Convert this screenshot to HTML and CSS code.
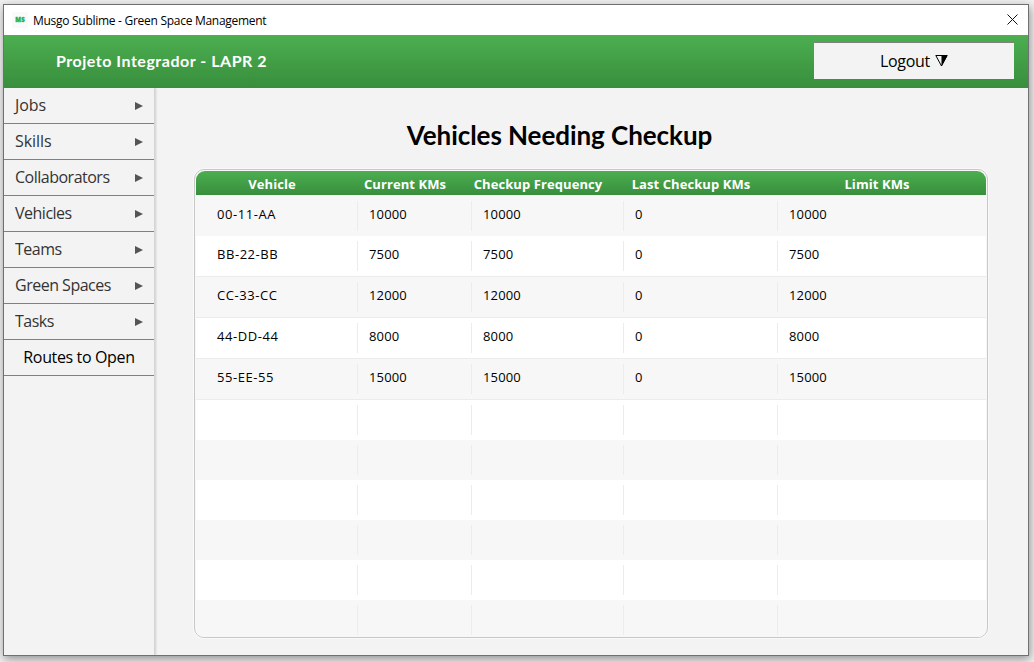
FILE: index.html
```html
<!DOCTYPE html>
<html lang="en">
<head>
<meta charset="utf-8">
<title>Musgo Sublime - Green Space Management</title>
<link rel="stylesheet" href="styles.css">
</head>
<body>
<div class="window">
  <div class="titlebar">
    <span class="app-icon">MS</span>
    <span class="app-title"><span>Musgo Sublime - Green Space Management</span></span>
    <svg class="close" width="11" height="11" viewBox="0 0 11 11"><path d="M.5 .5l10 10M10.5 .5l-10 10"/></svg>
  </div>
  <header class="header">
    <h1 class="brand"><span>Projeto Integrador - LAPR 2</span></h1>
    <button class="logout"><span>Logout</span><svg width="13" height="12" viewBox="0 0 13 12"><path d="M.8 .5H12.2L6.5 11Z" fill="none" stroke="#000"/><path d="M6.5 .5H12.4L6.5 11.2Z"/></svg></button>
  </header>
  <div class="body">
    <nav class="sidebar">
      <a class="item wide"><span>Jobs</span><svg class="arrow" width="8" height="8" viewBox="0 0 8 8"><path d="M0 0L8 4L0 8Z"/></svg></a>
      <a class="item wide"><span>Skills</span><svg class="arrow" width="8" height="8" viewBox="0 0 8 8"><path d="M0 0L8 4L0 8Z"/></svg></a>
      <a class="item"><span>Collaborators</span><svg class="arrow" width="8" height="8" viewBox="0 0 8 8"><path d="M0 0L8 4L0 8Z"/></svg></a>
      <a class="item"><span>Vehicles</span><svg class="arrow" width="8" height="8" viewBox="0 0 8 8"><path d="M0 0L8 4L0 8Z"/></svg></a>
      <a class="item"><span>Teams</span><svg class="arrow" width="8" height="8" viewBox="0 0 8 8"><path d="M0 0L8 4L0 8Z"/></svg></a>
      <a class="item"><span>Green Spaces</span><svg class="arrow" width="8" height="8" viewBox="0 0 8 8"><path d="M0 0L8 4L0 8Z"/></svg></a>
      <a class="item"><span>Tasks</span><svg class="arrow" width="8" height="8" viewBox="0 0 8 8"><path d="M0 0L8 4L0 8Z"/></svg></a>
      <a class="item plain"><span>Routes to Open</span></a>
    </nav>
    <main class="content">
      <h2 class="heading"><span>Vehicles Needing Checkup</span></h2>
      <div class="table">
        <div class="thead"><span>Vehicle</span><span>Current KMs</span><span>Checkup Frequency</span><span>Last Checkup KMs</span><span>Limit KMs</span></div>
        <div class="row odd"><span>00-11-AA</span><span>10000</span><span>10000</span><span>0</span><span>10000</span></div>
        <div class="row line"><span>BB-22-BB</span><span>7500</span><span>7500</span><span>0</span><span>7500</span></div>
        <div class="row odd line"><span>CC-33-CC</span><span>12000</span><span>12000</span><span>0</span><span>12000</span></div>
        <div class="row line"><span>44-DD-44</span><span>8000</span><span>8000</span><span>0</span><span>8000</span></div>
        <div class="row odd line"><span>55-EE-55</span><span>15000</span><span>15000</span><span>0</span><span>15000</span></div>
        <div class="row"><span></span><span></span><span></span><span></span><span></span></div>
        <div class="row odd"><span></span><span></span><span></span><span></span><span></span></div>
        <div class="row"><span></span><span></span><span></span><span></span><span></span></div>
        <div class="row odd"><span></span><span></span><span></span><span></span><span></span></div>
        <div class="row"><span></span><span></span><span></span><span></span><span></span></div>
        <div class="row odd"><span></span><span></span><span></span><span></span><span></span></div>
      </div>
    </main>
  </div>
</div>
</body>
</html>
```
FILE: styles.css
```css
* { box-sizing: border-box; }
body {
  margin: 0;
  height: 662px;
  padding: 4px 5px 6px 3px;
  overflow: hidden;
  background: #f0f0f0;
  font-family: "Open Sans", "Noto Sans", sans-serif;
  color: #000;
}
.window {
  display: flex;
  flex-direction: column;
  width: 1026px;
  height: 652px;
  border: 1px solid #707070;
  background: #f3f3f3;
  box-shadow: 1px 3px 9px rgba(0, 0, 0, .4);
}
.titlebar {
  display: flex;
  align-items: center;
  height: 30px;
  padding: 0 10px 0 8px;
  background: #fff;
}
.app-icon {
  width: 16px;
  height: 16px;
  margin-top: -1px;
  background: #fafafa;
  color: #22b14c;
  font: 800 6px/16px "Open Sans", sans-serif;
  -webkit-text-stroke: .3px #22b14c;
  text-align: center;
}
.app-title {
  flex: 1;
  padding-left: 5px;
  font-size: 12px;
  letter-spacing: -.28px;
}
.close { stroke: #111; fill: none; margin-top: -2px; }
.header {
  display: flex;
  align-items: center;
  justify-content: space-between;
  height: 53px;
  padding: 0 14px 0 52px;
  background: linear-gradient(#4caf50, #388e3c);
}
.brand {
  margin: -2px 0 0;
  color: #fff;
  font: bold 16px/24px Lato, sans-serif;
  letter-spacing: .52px;
}
.logout {
  display: flex;
  align-items: center;
  justify-content: center;
  gap: 5px;
  width: 200px;
  height: 37px;
  margin-bottom: 2px;
  padding: 0;
  border: 0;
  border-top: 1px solid #808080;
  background: #f3f3f3;
  font: 16px "Open Sans", sans-serif;
  letter-spacing: -.3px;
  color: #000;
}
.body { display: flex; flex: 1; }
.sidebar {
  flex: none;
  width: 151px;
  border-right: 1px solid #d4d4d4;
  box-shadow: 1px 0 2px rgba(0, 0, 0, .15);
  clip-path: inset(0 -5px 0 0);
}
.item {
  display: flex;
  align-items: center;
  justify-content: space-between;
  height: 36px;
  padding: 0 11px 1px;
  border-bottom: 1px solid #808080;
  color: #333;
  font-size: 16px;
  letter-spacing: -.5px;
}
.wide { letter-spacing: -.05px; }
.arrow { fill: #555; margin-top: 2px; }
.plain { justify-content: center; color: #000; letter-spacing: -.36px; }
.content { flex: 1; padding: 26px 40px 0 39px; }
.heading {
  margin: 0;
  height: 55px;
  padding-right: 63px;
  font: bold 26px/42px Lato, sans-serif;
  letter-spacing: -.06px;
  text-align: center;
}
.table {
  width: 794px;
  height: 469px;
  border: 1px solid #c8c8c8;
  border-radius: 10px;
  padding: 1px;
  overflow: hidden;
  background: #f7f7f7;
  box-shadow: 0 0 0 1px #f9f9f9;
}
.thead {
  display: grid;
  grid-template-columns: 152px 114px 152px 154px 1fr;
  align-items: center;
  width: 790px;
  height: 24px;
  margin-bottom: 1px;
  padding-top: 2px;
  border-radius: 9px 9px 0 0;
  background: linear-gradient(#4caf50, #388e3c);
  color: #fff;
  font-size: 13px;
  font-weight: bold;
  letter-spacing: .08px;
  text-align: center;
}
.row {
  display: grid;
  grid-template-columns: 162px 114px 152px 154px 1fr;
  align-content: start;
  height: 40px;
  padding-top: 5px;
  background: #fff;
}
.odd { background: #f7f7f7; }
.line { height: 41px; border-bottom: 1px solid #ececec; }
.row span {
  height: 30px;
  padding-left: 11px;
  border-right: 1px solid #ececec;
  font-size: 13px;
  line-height: 27px;
  letter-spacing: .15px;
}
.row span:first-child { padding-left: 21px; letter-spacing: .55px; }
.row span:last-child { border-right: 0; }
```
